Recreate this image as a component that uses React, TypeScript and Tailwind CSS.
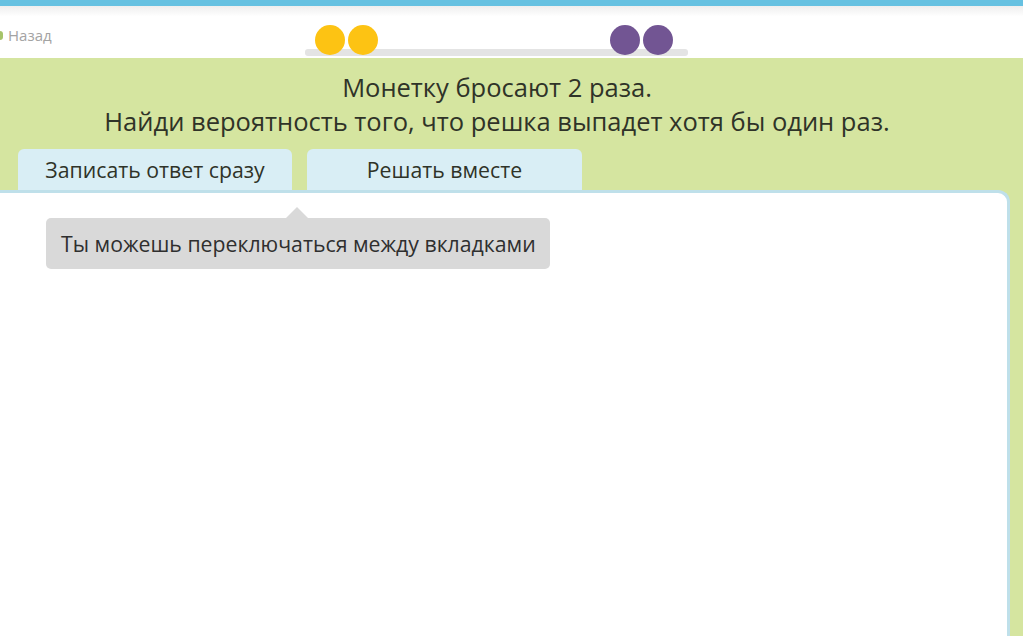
import React from 'react';

const font = { fontFamily: '"Open Sans", "Noto Sans", sans-serif' };

export default function App() {
  return (
    <div className="h-[636px] w-[1023px] overflow-hidden flex flex-col bg-[#d5e5a0]" style={font}>
      {/* top stripe */}
      <div className="h-[6px] bg-[#66c1e1] shrink-0" />

      {/* header */}
      <div className="relative h-[52px] shrink-0 bg-gradient-to-b from-[#eeeeee] via-white to-white via-[20%]">
        <div className="absolute left-0 top-[22px] flex items-center gap-[5px]">
          <span className="block w-[3px] h-[9px] rounded-r-full bg-[#a6c46a]" />
          <span className="text-[15px] text-[#a3a3a3] leading-none">Назад</span>
        </div>
        {/* progress */}
        <div className="absolute left-[305px] top-[43px] w-[383px] h-[7px] rounded-[3px] bg-[#e4e4e4]" />
        <div className="absolute left-[315px] top-[19px] flex gap-[3px]">
          <span className="block w-[30px] h-[30px] rounded-full bg-[#fdc313]" />
          <span className="block w-[30px] h-[30px] rounded-full bg-[#fdc313]" />
        </div>
        <div className="absolute left-[610px] top-[19px] flex gap-[3px]">
          <span className="block w-[30px] h-[30px] rounded-full bg-[#725593]" />
          <span className="block w-[30px] h-[30px] rounded-full bg-[#725593]" />
        </div>
      </div>

      {/* task */}
      <div className="flex-1 flex flex-col">
        <div className="w-[994px] pt-[12px] text-center text-[25.5px] leading-[34px] text-[#2f3328]">
          <p>Монетку бросают 2 раза.</p>
          <p>Найди вероятность того, что решка выпадет хотя бы один раз.</p>
        </div>

        <div className="flex gap-[15px] pl-[18px] mt-[11px]">
          <button className="w-[274px] h-[41px] rounded-t-[6px] bg-[#d9eef5] text-[21.25px] text-[#2f3328] pt-[1px]">
            Записать ответ сразу
          </button>
          <button className="w-[275px] h-[41px] rounded-t-[6px] bg-[#d9eef5] text-[21.25px] text-[#2f3328] pt-[1px]">
            Решать вместе
          </button>
        </div>

        <div className="relative flex-1 -ml-[10px] w-[1020px] rounded-tr-[12px] border-[3px] border-b-0 border-[#bfe0ea] bg-white">
          <div className="absolute left-[53px] top-[25px]">
            <div className="absolute left-[240px] -top-[11px] w-0 h-0 border-x-[11px] border-x-transparent border-b-[11px] border-b-[#d9d9d9]" />
            <div className="w-[504px] h-[51px] rounded-[5px] bg-[#d9d9d9] flex items-center pl-[15px] text-[21.25px] text-[#2f2f2f]">
              Ты можешь переключаться между вкладками
            </div>
          </div>
        </div>
      </div>
    </div>
  );
}
